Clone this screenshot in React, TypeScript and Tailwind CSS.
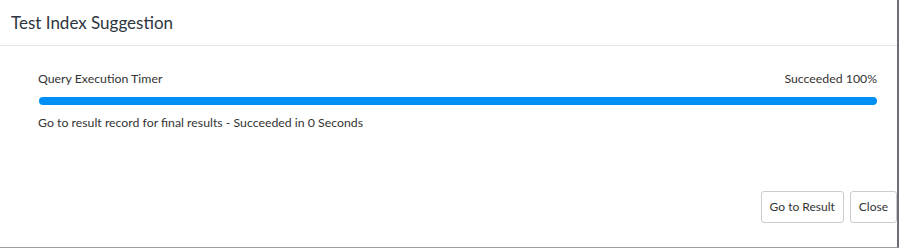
import React from "react";

export default function App() {
  return (
    <div className="w-[900px] h-[248px] bg-white" style={{ fontFamily: '"Source Sans Pro", Lato, "Noto Sans", sans-serif' }}>
      <div className="w-[899px] h-[248px] border-r-2 border-b border-r-[#6b6f73] border-b-[#9a9ea2] flex flex-col">
        <div className="h-[46px] border-b border-[#e5e5e5] flex items-center pl-[11px] pt-[1px]">
          <span className="text-[17px] text-[#2d3640]">Test Index Suggestion</span>
        </div>
        <div className="pl-[38px] pr-[20px] pt-[25px] flex-1">
          <div className="flex justify-between text-[12.3px] text-[#333] leading-[16px]">
            <span>Query Execution Timer</span>
            <span>Succeeded 100%</span>
          </div>
          <div className="mt-[10px] ml-[1px] h-[8px] rounded-full bg-[#0090f5]" />
          <div className="mt-[10px] text-[12.3px] text-[#333] leading-[16px]">
            Go to result record for final results - Succeeded in 0 Seconds
          </div>
        </div>
        <div className="flex justify-end gap-[6px] pb-[24px]">
          <button className="h-[32px] px-[8px] border border-[#ccc] rounded-[3px] bg-white text-[12px] text-[#333]">Go to Result</button>
          <button className="h-[32px] px-[8px] border border-[#ccc] rounded-[3px] bg-white text-[12px] text-[#333]">Close</button>
        </div>
      </div>
    </div>
  );
}
